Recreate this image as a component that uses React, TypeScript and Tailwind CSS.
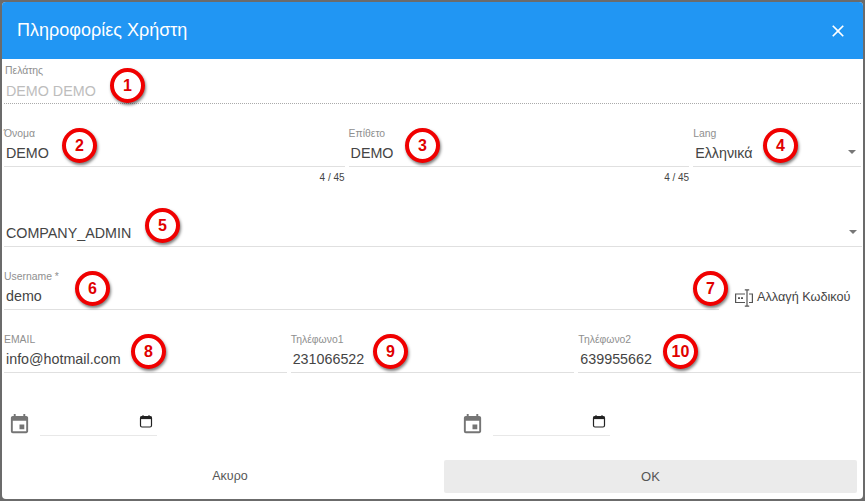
import { MdClose, MdEvent } from "react-icons/md";

interface FieldProps {
  label?: string;
  value: string;
  className?: string;
  counter?: string;
  select?: boolean;
}

function Field({ label, value, className = "", counter, select }: FieldProps) {
  return (
    <div className={className}>
      <div className="relative h-[39px] border-b border-[#e0e0e0]">
        {label && <div className="absolute left-0 top-0 text-[10.4px] leading-3 text-[#8f8f8f]">{label}</div>}
        <div className="absolute left-[2px] top-[15px] text-[14.3px] leading-5 text-[#444]">{value}</div>
        {select && (
          <div className="absolute right-[5px] top-[22px] h-0 w-0 border-x-[4px] border-t-[4px] border-x-transparent border-t-[#777]" />
        )}
      </div>
      {counter && <div className="pt-[5px] text-right text-[10px] leading-3 text-[#444]">{counter}</div>}
    </div>
  );
}

function Badge({ n, className }: { n: number; className: string }) {
  return (
    <div
      className={`absolute flex h-[35px] w-[35px] items-center justify-center rounded-full border-[4px] border-[#f00000] bg-white text-[16px] font-bold text-[#e00000] shadow-[1px_2px_3px_rgba(0,0,0,0.5)] ${className}`}
    >
      {n}
    </div>
  );
}

function DateField({ className }: { className: string }) {
  return (
    <div className={`flex items-end ${className}`}>
      <MdEvent className="text-[#757575]" size={23} />
      <div className="ml-[9px] flex h-[28px] w-[117px] items-start justify-end border-b border-[#e8e8e8] pr-[4px] pt-[6px]">
        <svg width="14" height="14" viewBox="0 0 14 14" fill="none">
          <rect x="1.5" y="2.5" width="11" height="10.5" rx="1.5" stroke="#222" strokeWidth="1.2" />
          <rect x="1.5" y="2.5" width="11" height="2.6" fill="#222" />
          <path d="M4 1v2M10 1v2" stroke="#222" strokeWidth="1" />
        </svg>
      </div>
    </div>
  );
}

export default function App() {
  return (
    <div className="relative h-[501px] w-[865px] bg-[#6b6b6b] p-[2px] font-['Liberation_Sans',sans-serif]">
      <div className="flex h-[497px] w-[861px] flex-col overflow-hidden rounded-[4px] bg-white">
        <div className="flex h-[57px] shrink-0 items-center justify-between bg-[#2196f3] pl-[15px] pr-[15px] text-white">
          <div className="text-[18px]">Πληροφορίες Χρήστη</div>
          <MdClose size={20} />
        </div>

        <div className="mx-[2px] h-[45px] border-b border-dotted border-[#aaa]">
          <div className="pl-[1px] pt-[6px] text-[10.4px] leading-3 text-[#8f8f8f]">Πελάτης</div>
          <div className="pl-[2px] pt-[4px] text-[14.3px] leading-5 text-[#bdbdbd]">DEMO DEMO</div>
        </div>

        <div className="mx-[2px] mt-[24px] flex gap-[4px]">
          <Field label="Όνομα" value="DEMO" counter="4 / 45" className="w-[341px]" />
          <Field label="Επίθετο" value="DEMO" counter="4 / 45" className="w-[341px]" />
          <Field label="Lang" value="Ελληνικά" select className="w-[168px]" />
        </div>

        <div className="mx-[2px] mt-[24px]">
          <Field value="COMPANY_ADMIN" select className="w-[858px]" />
        </div>

        <div className="mx-[2px] mt-[24px] flex items-start">
          <Field label="Username *" value="demo" className="w-[715px]" />
          <div className="ml-[16px] mt-[17px] flex items-center gap-[4px] text-[12.7px] text-[#444]">
            <svg width="18" height="18" viewBox="0 0 18 18" fill="none" stroke="#555" strokeWidth="1.2">
              <path d="M10 5H.6v8.5H10M14 5h3.4v8.5H14" />
              <path d="M12 .8v16.4M9.8 .8h4.4M9.8 17.2h4.4" />
              <path d="M3 9.2h2M6 9.2h2" strokeWidth="1.8" />
            </svg>
            Αλλαγή Κωδικού
          </div>
        </div>

        <div className="mx-[2px] mt-[24px] flex gap-[4px]">
          <Field label="EMAIL" value="info@hotmail.com" className="w-[283px]" />
          <Field label="Τηλέφωνο1" value="231066522" className="w-[284px]" />
          <Field label="Τηλέφωνο2" value="639955662" className="w-[283px]" />
        </div>

        <div className="mt-[35px] flex">
          <DateField className="ml-[6px]" />
          <DateField className="ml-[304px]" />
        </div>

        <div className="mt-[24px] flex pl-[2px]">
          <div className="flex h-[33px] w-[440px] items-center justify-center pl-[12px] text-[12.5px] text-[#555]">Ακυρο</div>
          <div className="flex h-[33px] w-[413px] items-center justify-center rounded-[2px] bg-[#ebebeb] text-[13px] text-[#555]">OK</div>
        </div>
      </div>

      <Badge n={1} className="left-[110px] top-[68px]" />
      <Badge n={2} className="left-[62px] top-[128px]" />
      <Badge n={3} className="left-[405px] top-[128px]" />
      <Badge n={4} className="left-[763px] top-[128px]" />
      <Badge n={5} className="left-[145px] top-[208px]" />
      <Badge n={6} className="left-[75px] top-[271px]" />
      <Badge n={7} className="left-[693px] top-[271px]" />
      <Badge n={8} className="left-[131px] top-[334px]" />
      <Badge n={9} className="left-[373px] top-[334px]" />
      <Badge n={10} className="left-[663px] top-[334px]" />
    </div>
  );
}
